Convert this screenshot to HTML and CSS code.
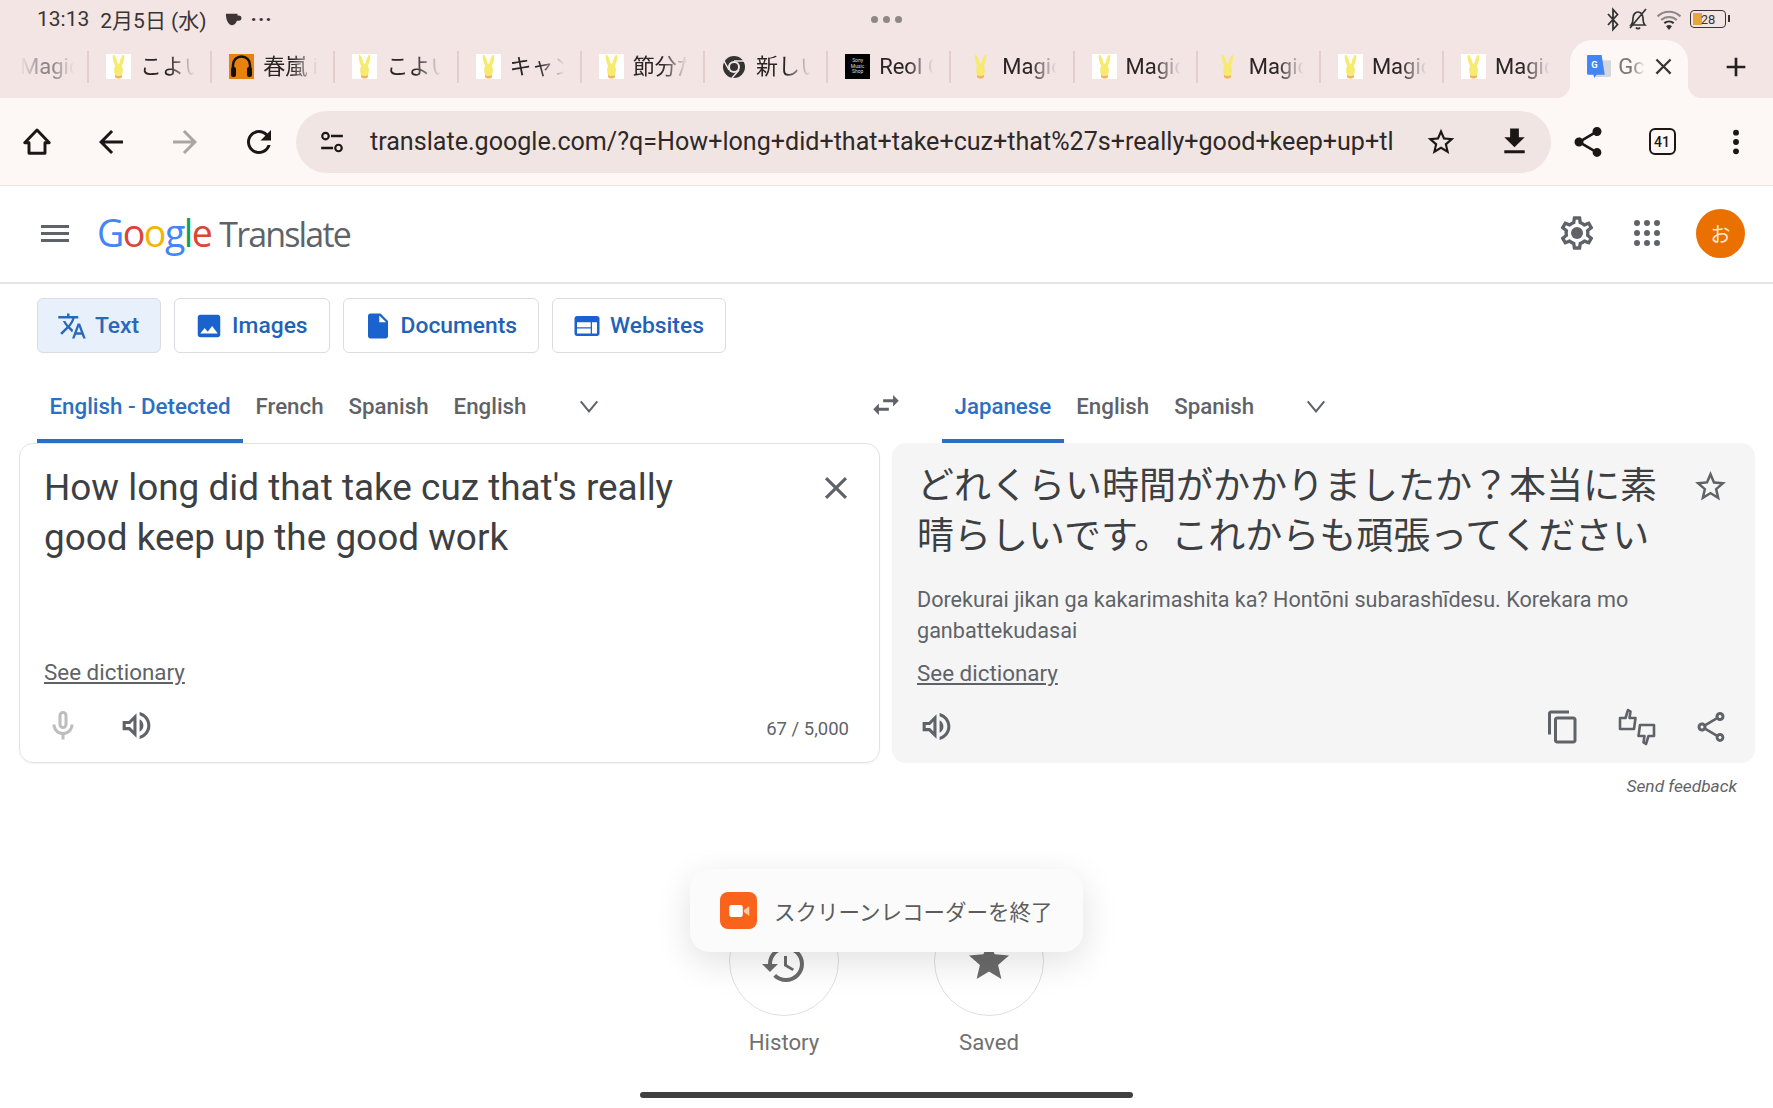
FILE: index.html
```html
<!DOCTYPE html>
<html lang="ja">
<head>
  <meta charset="UTF-8">
  <title>Google Translate</title>
  <link rel="stylesheet" href="styles.css">
</head>
<body>
  <svg class="defs" width="0" height="0">
    <symbol id="bunny" viewBox="0 0 25 40">
      <path d="M4 1c3 0 6 8 7 14h3c1-6 4-14 7-14 2 2 0 12-3 18 2 4 2 10 0 14-3 3-8 3-11 0-2-4-2-10 0-14C4 13 2 3 4 1z" fill="#f7ea70"/>
      <path d="M7 33c3 3 8 3 11 0v4c-3 3-8 3-11 0z" fill="#f2b35c"/>
    </symbol>
    <symbol id="speaker" viewBox="0 0 24 24">
      <path d="M3 9v6h4l5 5V4L7 9H3zm7-.17v6.34L7.83 13H5v-2h2.83L10 8.83zM16.5 12c0-1.77-1.02-3.29-2.5-4.03v8.05c1.48-.73 2.5-2.25 2.5-4.02zM14 3.23v2.06c2.89.86 5 3.54 5 6.71s-2.11 5.85-5 6.71v2.06c4.01-.91 7-4.49 7-8.77 0-4.28-2.99-7.86-7-8.77z"/>
    </symbol>
    <symbol id="star-line" viewBox="0 0 24 24">
      <path d="M22 9.24l-7.19-.62L12 2 9.19 8.63 2 9.24l5.46 4.73L5.82 21 12 17.27 18.18 21l-1.63-7.03L22 9.24zM12 15.4l-3.76 2.27 1-4.28-3.32-2.88 4.38-.38L12 6.1l1.71 4.04 4.38.38-3.32 2.88 1 4.28L12 15.4z"/>
    </symbol>
    <symbol id="chevron" viewBox="0 0 24 24">
      <path d="M3 7l9 11 9-11" fill="none" stroke="#5f6368" stroke-width="2.2"/>
    </symbol>
    <symbol id="close" viewBox="0 0 24 24">
      <path d="M19 6.41L17.59 5 12 10.59 6.41 5 5 6.41 10.59 12 5 17.59 6.41 19 12 13.41 17.59 19 19 17.59 13.41 12z"/>
    </symbol>
  </svg>

  <div class="status-bar">
    <div class="status-left">
      <span>13:13</span><span>2月5日 (水)</span>
      <svg class="st-cup" viewBox="0 0 20 18" width="18" height="16"><path d="M2 3h13v2h1.5a3 3 0 0 1 0 6H14.400c-1 3-3 5-5.400 5-4 0-7-6-7-13z" fill="#3b3535"/></svg>
      <span class="st-more">···</span>
    </div>
    <div class="status-dots"><i></i><i></i><i></i></div>
    <div class="status-right">
      <svg viewBox="0 0 14 24" width="14" height="25"><path d="M2 6.500l9.500 10.500L7 22V2l4.500 5L2 17.500" fill="none" stroke="#333" stroke-width="1.800"/></svg>
      <svg viewBox="0 0 24 24" width="24" height="26"><path d="M5 18c2-2 2-4 2-7 0-3 2-6 5-6s5 3 5 6c0 3 0 5 2 7zM10 20.500c1 1.500 3 1.500 4 0M4 21L20 2" fill="none" stroke="#333" stroke-width="1.700"/></svg>
      <svg viewBox="0 0 24 24" width="26" height="25"><path d="M1 9a16 16 0 0 1 22 0M4.500 12.500a11 11 0 0 1 15 0" fill="none" stroke="#8d8887" stroke-width="2"/><path d="M7.500 15.500a7 7 0 0 1 9 0" fill="none" stroke="#333" stroke-width="2"/><path d="M12 22l-2.800-3.500a4.500 4.500 0 0 1 5.600 0z" fill="#333"/></svg>
      <div class="battery"><div class="battery-fill"></div><span>28</span></div>
    </div>
  </div>

  <div class="tab-strip">
    <div class="tab tab-first"><span class="tab-name tab-name-first">Magic</span></div>
    <div class="tab"><span class="fav fav-white"><svg width="25" height="25"><use href="#bunny"/></svg></span><span class="tab-name">こよい</span></div>
    <div class="tab"><span class="fav fav-orange"><svg viewBox="0 0 25 25" width="25" height="25"><path d="M4 14v-3a8.500 8.500 0 0 1 17 0v3" fill="none" stroke="#111" stroke-width="2.500"/><rect x="2" y="13" width="5" height="10" rx="2" fill="#111"/><rect x="18" y="13" width="5" height="10" rx="2" fill="#111"/></svg></span><span class="tab-name">春嵐 in</span></div>
    <div class="tab"><span class="fav fav-white"><svg width="25" height="25"><use href="#bunny"/></svg></span><span class="tab-name">こよい</span></div>
    <div class="tab"><span class="fav fav-white"><svg width="25" height="25"><use href="#bunny"/></svg></span><span class="tab-name">キャン</span></div>
    <div class="tab"><span class="fav fav-white"><svg width="25" height="25"><use href="#bunny"/></svg></span><span class="tab-name">節分だ</span></div>
    <div class="tab"><span class="fav"><svg viewBox="0 0 24 24" width="24" height="24"><circle cx="12" cy="12" r="11" fill="#333"/><circle cx="12" cy="12" r="6" fill="#f2e5e4"/><circle cx="12" cy="12" r="4" fill="#333"/><path d="M12 6h10M7 15L2 6M17 15l-7 8" stroke="#f2e5e4" stroke-width="1.500"/></svg></span><span class="tab-name">新しい</span></div>
    <div class="tab"><span class="fav fav-black"><small>Sony Music Shop</small></span><span class="tab-name">Reol O</span></div>
    <div class="tab"><span class="fav"><svg width="25" height="25"><use href="#bunny"/></svg></span><span class="tab-name">Magic</span></div>
    <div class="tab"><span class="fav fav-white"><svg width="25" height="25"><use href="#bunny"/></svg></span><span class="tab-name">Magic</span></div>
    <div class="tab"><span class="fav"><svg width="25" height="25"><use href="#bunny"/></svg></span><span class="tab-name">Magic</span></div>
    <div class="tab"><span class="fav fav-white"><svg width="25" height="25"><use href="#bunny"/></svg></span><span class="tab-name">Magic</span></div>
    <div class="tab tab-last"><span class="fav fav-white"><svg width="25" height="25"><use href="#bunny"/></svg></span><span class="tab-name">Magic</span></div>
    <div class="tab-active">
      <svg viewBox="0 0 24 24" width="25" height="25"><rect x="9" y="6" width="15" height="16" rx="1" fill="#d5d8da"/><path d="M2 1h13l3 19h-8l-2 3-1-3H2a1 1 0 0 1-1-1V2a1 1 0 0 1 1-1z" fill="#4285f4"/><text x="5" y="13" font-size="9" font-family="Roboto" font-weight="700" fill="#fff">G</text></svg>
      <span class="tab-name tab-name-short">Gc</span>
      <svg class="tab-close" width="27" height="27"><use href="#close"/></svg>
    </div>
    <svg class="tab-plus" viewBox="0 0 24 24" width="32" height="32"><path d="M19 13h-6v6h-2v-6H5v-2h6V5h2v6h6v2z" fill="#222"/></svg>
  </div>

  <div class="toolbar">
    <div class="tool"><svg viewBox="0 0 24 24" width="32" height="32"><path d="M12 3L2.800 12.500H6V20.500H18V12.500H21.200z" fill="none" stroke="#1c1717" stroke-width="2.200" stroke-linejoin="round"/></svg></div>
    <div class="tool"><svg viewBox="0 0 24 24" width="36" height="36"><path d="M20 11H7.830l5.590-5.590L12 4l-8 8 8 8 1.410-1.410L7.830 13H20v-2z" fill="#1c1717"/></svg></div>
    <div class="tool"><svg viewBox="0 0 24 24" width="36" height="36"><path d="M4 11h12.170l-5.590-5.590L12 4l8 8-8 8-1.410-1.410L16.170 13H4v-2z" fill="#aaa5a4"/></svg></div>
    <div class="tool"><svg viewBox="0 0 24 24" width="36" height="36"><path d="M17.650 6.350C16.200 4.900 14.210 4 12 4c-4.420 0-7.990 3.580-7.990 8s3.570 8 7.990 8c3.730 0 6.840-2.550 7.730-6h-2.080c-.82 2.330-3.040 4-5.650 4-3.310 0-6-2.690-6-6s2.690-6 6-6c1.660 0 3.140.69 4.220 1.780L13 11h7V4l-2.350 2.350z" fill="#1c1717"/></svg></div>
    <div class="url-bar">
      <svg class="url-tune" viewBox="0 0 24 24" width="26" height="26"><circle cx="6" cy="6.500" r="3" fill="none" stroke="#1c1717" stroke-width="2"/><path d="M11 6.500h11M2 17.500h11" stroke="#1c1717" stroke-width="2.200"/><circle cx="18" cy="17.500" r="3" fill="none" stroke="#1c1717" stroke-width="2"/></svg>
      <div class="url-text">translate.google.com/?q=How+long+did+that+take+cuz+that%27s+really+good+keep+up+tl</div>
      <svg class="url-star" width="32" height="32" fill="#1c1717"><use href="#star-line"/></svg>
      <svg class="url-down" viewBox="0 0 24 24" width="35" height="35"><path d="M19 9h-4V3H9v6H5l7 7 7-7zM5 18v2h14v-2H5z" fill="#1c1717"/></svg>
    </div>
    <div class="tool"><svg viewBox="0 0 24 24" width="36" height="36"><path d="M18 16.080c-.76 0-1.440.3-1.960.77L8.910 12.700c.05-.23.09-.46.09-.7s-.04-.47-.09-.7l7.050-4.110c.54.5 1.250.81 2.040.81 1.660 0 3-1.340 3-3s-1.340-3-3-3-3 1.340-3 3c0 .24.04.47.09.7L8.040 9.810C7.500 9.310 6.790 9 6 9c-1.660 0-3 1.340-3 3s1.340 3 3 3c.79 0 1.500-.31 2.040-.81l7.120 4.160c-.05.21-.08.43-.08.65 0 1.610 1.310 2.920 2.920 2.920 1.610 0 2.920-1.310 2.920-2.920s-1.310-2.920-2.920-2.920z" fill="#1c1717"/></svg></div>
    <div class="tool"><div class="tab-count">41</div></div>
    <div class="tool"><svg viewBox="0 0 24 24" width="32" height="32"><circle cx="12" cy="5" r="2.200" fill="#1c1717"/><circle cx="12" cy="12" r="2.200" fill="#1c1717"/><circle cx="12" cy="19" r="2.200" fill="#1c1717"/></svg></div>
  </div>

  <header class="gt-header">
    <svg class="menu-icon" viewBox="0 0 30 30" width="30" height="30"><path d="M1 7h28v3H1zM1 14h28v3H1zM1 21h28v3H1z" fill="#5f6368"/></svg>
    <div class="logo"><span class="lg-b">G</span><span class="lg-r">o</span><span class="lg-y">o</span><span class="lg-b">g</span><span class="lg-g">l</span><span class="lg-r">e</span><span class="logo-name">Translate</span></div>
    <svg class="gear" viewBox="0 0 24 24" width="40" height="40"><path fill="#5f6368" d="M19.430 12.980c.04-.32.07-.64.07-.98 0-.34-.03-.66-.07-.98l2.110-1.650c.19-.15.24-.42.12-.64l-2-3.460c-.09-.16-.26-.25-.44-.25-.06 0-.12.01-.17.03l-2.490 1c-.52-.4-1.080-.73-1.690-.98l-.38-2.650C14.460 2.180 14.250 2 14 2h-4c-.25 0-.46.18-.49.42l-.38 2.650c-.61.25-1.170.59-1.690.98l-2.490-1c-.06-.02-.12-.03-.18-.03-.17 0-.34.09-.43.25l-2 3.460c-.13.22-.07.49.12.64l2.110 1.650c-.04.32-.07.65-.07.98 0 .33.03.66.07.98l-2.110 1.650c-.19.15-.24.42-.12.64l2 3.460c.09.16.26.25.44.25.06 0 .12-.01.17-.03l2.490-1c.52.4 1.080.73 1.690.98l.38 2.650c.03.24.24.42.49.42h4c.25 0 .46-.18.49-.42l.38-2.650c.61-.25 1.170-.59 1.690-.98l2.490 1c.06.02.12.03.18.03.17 0 .34-.09.43-.25l2-3.460c.12-.22.07-.49-.12-.64l-2.110-1.650zm-1.980-1.710c.04.31.05.52.05.73 0 .21-.02.43-.05.73l-.14 1.130.89.7 1.080.84-.7 1.210-1.270-.51-1.040-.42-.9.68c-.43.32-.84.56-1.250.73l-1.060.43-.16 1.130-.2 1.350h-1.400l-.19-1.350-.16-1.130-1.060-.43c-.43-.18-.83-.41-1.230-.71l-.91-.7-1.060.43-1.270.51-.7-1.210 1.080-.84.89-.7-.14-1.130c-.03-.31-.05-.54-.05-.74s.02-.43.05-.73l.14-1.130-.89-.7-1.080-.84.7-1.210 1.270.51 1.040.42.9-.68c.43-.32.84-.56 1.250-.73l1.060-.43.16-1.130.2-1.350h1.390l.19 1.350.16 1.130 1.060.43c.43.18.83.41 1.230.71l.91.7 1.060-.43 1.270-.51.7 1.210-1.070.85-.89.7.14 1.130z"/><circle cx="12" cy="12" r="3.600" fill="#5f6368"/></svg>
    <div class="apps"><i></i><i></i><i></i><i></i><i></i><i></i><i></i><i></i><i></i></div>
    <div class="avatar">お</div>
  </header>

  <main class="translate">
    <div class="modes">
      <button class="mode mode-on"><svg viewBox="0 0 24 24" width="30" height="30"><path d="M12.870 15.070l-2.540-2.510.03-.03c1.740-1.940 2.980-4.170 3.710-6.530H17V4h-7V2H8v2H1v1.990h11.170C11.500 7.920 10.440 9.750 9 11.350 8.070 10.320 7.300 9.190 6.690 8h-2c.73 1.630 1.730 3.170 2.980 4.560l-5.090 5.020L4 19l5-5 3.110 3.110.76-2.040zM18.500 10h-2L12 22h2l1.120-3h4.750L21 22h2l-4.500-12zm-2.620 7l1.620-4.330L19.120 17h-3.240z"/></svg>Text</button>
      <button class="mode"><svg viewBox="0 0 24 24" width="30" height="30"><path d="M21 19V5c0-1.100-.9-2-2-2H5c-1.100 0-2 .9-2 2v14c0 1.100.9 2 2 2h14c1.100 0 2-.9 2-2zM8.500 13.500l2.500 3.010L14.500 12l4.500 6H5l3.500-4.500z"/></svg>Images</button>
      <button class="mode"><svg viewBox="0 0 24 24" width="30" height="30"><path d="M14 2H6c-1.100 0-2 .9-2 2v16c0 1.100.9 2 2 2h12c1.100 0 2-.9 2-2V8l-6-6zM13 9V3.500L18.500 9H13z"/></svg>Documents</button>
      <button class="mode"><svg viewBox="0 0 24 24" width="30" height="30"><path d="M20 4H4c-1.100 0-2 .9-2 2v12c0 1.100.9 2 2 2h16c1.100 0 2-.9 2-2V6c0-1.100-.9-2-2-2zM4 9h11v4H4zm0 5h11v4H4zm12-5h4v9h-4z" fill-rule="evenodd"/></svg>Websites</button>
    </div>

    <div class="lang-row">
      <div class="lang-side lang-source">
        <div class="lang lang-on">English - Detected</div>
        <div class="lang">French</div>
        <div class="lang">Spanish</div>
        <div class="lang">English</div>
        <svg class="chevron" width="22" height="22"><use href="#chevron"/></svg>
        <svg class="swap" viewBox="0 0 24 24" width="34" height="34"><path d="M6.990 11L3 15l3.990 4v-3H14v-2H6.990v-3zM21 9l-3.990-4v3H10v2h7.010v3L21 9z" fill="#5f6368"/></svg>
      </div>
      <div class="lang-side">
        <div class="lang lang-on">Japanese</div>
        <div class="lang">English</div>
        <div class="lang">Spanish</div>
        <svg class="chevron chevron-out" width="22" height="22"><use href="#chevron"/></svg>
      </div>
    </div>

    <div class="panels">
      <section class="panel panel-in">
        <div class="big-row">
          <p class="big-text">How long did that take cuz that's really good keep up the good work</p>
          <svg class="close-in" width="38" height="38" fill="#5f6368"><use href="#close"/></svg>
        </div>
        <a class="dict">See dictionary</a>
        <div class="panel-foot">
          <svg class="foot-mic" viewBox="0 0 24 24" width="36" height="36"><path fill="#bdbdbd" d="M12 14c1.660 0 3-1.340 3-3V5c0-1.660-1.340-3-3-3S9 3.340 9 5v6c0 1.660 1.340 3 3 3zm-1-9c0-.55.45-1 1-1s1 .45 1 1v6c0 .55-.45 1-1 1s-1-.45-1-1V5zm6 6c0 2.760-2.240 5-5 5s-5-2.240-5-5H5c0 3.530 2.610 6.430 6 6.920V21h2v-3.080c3.390-.49 6-3.390 6-6.920h-2z"/></svg>
          <svg class="foot-speak" width="37" height="37" fill="#5f6368"><use href="#speaker"/></svg>
          <span class="counter">67 / 5,000</span>
        </div>
      </section>

      <section class="panel panel-out">
        <div class="big-row">
          <p class="big-text big-ja">どれくらい時間がかかりましたか？本当に素晴らしいです。これからも頑張ってください</p>
          <svg class="star-out" width="37" height="37" fill="#5f6368"><use href="#star-line"/></svg>
        </div>
        <p class="romaji">Dorekurai jikan ga kakarimashita ka? Hontōni subarashīdesu. Korekara mo ganbattekudasai</p>
        <a class="dict dict-out">See dictionary</a>
        <div class="panel-foot">
          <svg class="out-speak" width="37" height="37" fill="#5f6368"><use href="#speaker"/></svg>
          <div class="out-actions">
            <svg viewBox="0 0 24 24" width="36" height="38"><path fill="#5f6368" d="M16 1H4c-1.100 0-2 .9-2 2v14h2V3h12V1zm3 4H8c-1.100 0-2 .9-2 2v14c0 1.100.9 2 2 2h11c1.100 0 2-.9 2-2V7c0-1.100-.9-2-2-2zm0 16H8V7h11v14z"/></svg>
            <svg viewBox="0 0 40 40" width="40" height="40"><path d="M3 22V11h5.500L11 3l2.500 1.500-1 6.500H18.500L17 22zM37 18V29h-5.500L29 37l-2.500-1.500 1-6.500H21.500L23 18z" fill="none" stroke="#5f6368" stroke-width="2.600" stroke-linejoin="round"/></svg>
            <svg viewBox="0 0 24 24" width="36" height="36"><path fill="#5f6368" d="M18 16.080c-.76 0-1.440.3-1.960.77L8.910 12.700c.05-.23.09-.46.09-.7s-.04-.47-.09-.7l7.050-4.110c.54.5 1.250.81 2.040.81 1.660 0 3-1.340 3-3s-1.340-3-3-3-3 1.340-3 3c0 .24.04.47.09.7L8.040 9.810C7.500 9.310 6.790 9 6 9c-1.660 0-3 1.340-3 3s1.340 3 3 3c.79 0 1.500-.31 2.040-.81l7.120 4.160c-.05.21-.08.43-.08.65 0 1.610 1.310 2.920 2.920 2.920s2.920-1.310 2.920-2.920c0-1.610-1.310-2.920-2.920-2.920zM18 4c.55 0 1 .45 1 1s-.45 1-1 1-1-.45-1-1 .45-1 1-1zM6 13c-.55 0-1-.45-1-1s.45-1 1-1 1 .45 1 1-.45 1-1 1zm12 7.020c-.55 0-1-.45-1-1s.45-1 1-1 1 .45 1 1-.45 1-1 1z"/></svg>
          </div>
        </div>
      </section>
    </div>

    <div class="feedback">Send feedback</div>

    <div class="saved-row">
      <div class="saved-item">
        <div class="circle"><svg class="clock" viewBox="0 0 24 24" width="48" height="48"><path fill="#6b6b6b" d="M13 3c-4.970 0-9 4.030-9 9H1l3.890 3.890.07.14L9 12H6c0-3.870 3.130-7 7-7s7 3.130 7 7-3.130 7-7 7c-1.930 0-3.680-.79-4.940-2.060l-1.420 1.420C8.270 19.990 10.510 21 13 21c4.970 0 9-4.030 9-9s-4.030-9-9-9zm-1 5v5l4.280 2.540.72-1.210-3.500-2.080V8H12z"/></svg></div>
        <div class="saved-label">History</div>
      </div>
      <div class="saved-item">
        <div class="circle"><svg viewBox="0 0 24 24" width="48" height="48"><path fill="#6b6b6b" d="M12 17.270L18.180 21l-1.640-7.030L22 9.240l-7.190-.61L12 2 9.190 8.630 2 9.240l5.460 4.730L5.820 21z"/></svg></div>
        <div class="saved-label">Saved</div>
      </div>
    </div>
  </main>

  <div class="toast">
    <div class="toast-icon"><svg viewBox="0 0 24 24" width="26" height="26"><rect x="3" y="6.500" width="12.500" height="11" rx="2" fill="#fff"/><path d="M16.500 11l5-3.500v9l-5-3.500z" fill="#ffc9a8"/></svg></div>
    <span>スクリーンレコーダーを終了</span>
  </div>
  <div class="home-bar"></div>
</body>
</html>
```

FILE: styles.css
```css
* {
  box-sizing: border-box;
}
html, body {
  margin: 0;
  height: 100%;
}
body {
  position: relative;
  width: 1773px;
  height: 1108px;
  overflow: hidden;
  background: #fff;
  font-family: Roboto, "Noto Sans CJK JP", sans-serif;
  color: #3c4043;
}
.defs {
  position: absolute;
}

/* android status bar */
.status-bar {
  display: grid;
  grid-template-columns: 1fr auto 1fr;
  align-items: center;
  height: 40px;
  padding: 0 38px 2px 37px;
  background: #f2e5e4;
  color: #3a3434;
  font-size: 21px;
}
.status-left {
  display: flex;
  align-items: center;
  gap: 11px;
}
.st-cup {
  margin-left: 6px;
}
.st-more {
  margin-left: -2px;
  font-weight: 700;
  letter-spacing: 1px;
}
.status-dots {
  display: flex;
  gap: 5px;
}
.status-dots i {
  width: 7px;
  height: 7px;
  border-radius: 50%;
  background: #8d8887;
}
.status-right {
  display: flex;
  align-items: center;
  justify-content: flex-end;
  gap: 6px;
  padding-right: 9px;
}
.battery {
  position: relative;
  display: flex;
  align-items: center;
  justify-content: center;
  width: 36px;
  height: 18px;
  margin-left: 2px;
  border: 1.5px solid #3a3434;
  border-radius: 4px;
  font-size: 13px;
  line-height: 1;
}
.battery::after {
  content: "";
  position: absolute;
  right: -5px;
  top: 4px;
  width: 2px;
  height: 7px;
  background: #3a3434;
}
.battery-fill {
  position: absolute;
  left: 2px;
  top: 2px;
  bottom: 2px;
  width: 9px;
  background: #eaa53a;
}
.battery span {
  position: relative;
}

/* chrome tabs */
.tab-strip {
  display: flex;
  align-items: center;
  height: 58px;
  padding-bottom: 5px;
  background: #f2e5e4;
}
.tab {
  display: flex;
  flex: none;
  align-items: center;
  gap: 9px;
  width: 123.2px;
  height: 32px;
  padding-left: 17px;
  border-right: 2px solid #e2cfcb;
}
.tab-first {
  width: 89px;
  padding-left: 20px;
}
.tab-last {
  border-right: 0;
}
.fav {
  display: flex;
  flex: none;
  align-items: center;
  justify-content: center;
  width: 25px;
  height: 25px;
  overflow: hidden;
}
.fav-white {
  background: #fff;
}
.fav-orange {
  background: #e8820c;
}
.fav-black {
  background: #000;
}
.fav-black small {
  color: #ddd;
  font-size: 5px;
  line-height: 1.1;
  text-align: center;
}
.tab-name {
  flex: none;
  width: 68px;
  color: #2b2525;
  font-size: 22px;
  line-height: 30px;
  white-space: nowrap;
  -webkit-mask-image: linear-gradient(90deg, #000 42%, transparent 80%);
  mask-image: linear-gradient(90deg, #000 42%, transparent 80%);
}
.tab-name-first {
  width: 54px;
  color: #8b8483;
  -webkit-mask-image: linear-gradient(90deg, transparent 0, #000 45%, #000 60%, transparent 100%);
  mask-image: linear-gradient(90deg, transparent 0, #000 45%, #000 60%, transparent 100%);
}
.tab-name-short {
  width: 27px;
  color: #7b7574;
  -webkit-mask-image: linear-gradient(90deg, #000 50%, transparent 100%);
  mask-image: linear-gradient(90deg, #000 50%, transparent 100%);
}
.tab-active {
  position: relative;
  display: flex;
  flex: none;
  align-items: center;
  gap: 7px;
  align-self: flex-end;
  width: 118px;
  height: 58px;
  margin: 0 0 -5px 3px;
  padding: 0 0 5px 16px;
  border-radius: 22px 22px 0 0;
  background: #fdf8f6;
}
.tab-active::before,
.tab-active::after {
  content: "";
  position: absolute;
  bottom: 0;
  width: 14px;
  height: 14px;
  background: radial-gradient(circle at 0 0, #f2e5e4 14px, #fdf8f6 14.5px);
}
.tab-active::before {
  left: -14px;
}
.tab-active::after {
  right: -14px;
  background: radial-gradient(circle at 100% 0, #f2e5e4 14px, #fdf8f6 14.5px);
}
.tab-close {
  flex: none;
  margin-left: -2px;
  fill: #3a3434;
}
.tab-plus {
  margin-left: 32px;
}

/* chrome toolbar */
.toolbar {
  display: flex;
  align-items: center;
  height: 88px;
  background: #fdf8f6;
  border-bottom: 1px solid #efe7e5;
}
.tool {
  display: flex;
  flex: none;
  align-items: center;
  justify-content: center;
  width: 74px;
  height: 62px;
}
.url-bar {
  display: flex;
  flex: none;
  align-items: center;
  width: 1255px;
  height: 62px;
  padding-left: 23px;
  border-radius: 31px;
  background: #f1e5e3;
}
.url-tune {
  flex: none;
}
.url-text {
  flex: none;
  width: 1023px;
  margin-left: 25px;
  color: #2e2828;
  font-size: 25.1px;
  white-space: nowrap;
}
.url-star {
  flex: none;
  margin-left: 32px;
}
.url-down {
  flex: none;
  margin-left: 40px;
}
.tab-count {
  display: flex;
  align-items: center;
  justify-content: center;
  width: 27px;
  height: 27px;
  border: 2.5px solid #1c1717;
  border-radius: 6px;
  color: #1c1717;
  font-size: 14px;
  font-weight: 500;
}

/* translate header */
.gt-header {
  display: flex;
  align-items: center;
  height: 98px;
  padding: 0 28px 2px 40px;
  border-bottom: 2px solid #e6e6e6;
}
.menu-icon {
  flex: none;
}
.logo {
  margin: -2px 0 0 27px;
  font-family: "Open Sans", sans-serif;
  font-size: 37.5px;
  letter-spacing: -1.5px;
  white-space: nowrap;
}
.lg-b { color: #4285f4; }
.lg-r { color: #db4437; }
.lg-y { color: #f4b400; }
.lg-g { color: #0f9d58; }
.logo-name {
  margin-left: 8px;
  color: #5f6368;
  font-size: 34px;
  letter-spacing: -1.85px;
}
.gear {
  margin-left: auto;
}
.apps {
  display: grid;
  grid-template-columns: repeat(3, 6px);
  gap: 4px;
  margin-left: 37px;
}
.apps i {
  height: 6px;
  border-radius: 50%;
  background: #5f6368;
}
.avatar {
  display: flex;
  align-items: center;
  justify-content: center;
  width: 49px;
  height: 49px;
  margin-left: 36px;
  border-radius: 50%;
  background: #ea7000;
  color: #ffe9d5;
  font-size: 20px;
}

/* mode buttons */
.modes {
  display: flex;
  gap: 13px;
  padding: 14px 0 0 37px;
}
.mode {
  display: flex;
  align-items: center;
  gap: 8px;
  height: 55px;
  padding: 0 21px 0 19px;
  border: 1.5px solid #dadce0;
  border-radius: 6px;
  background: #fff;
  color: #1f63b8;
  font-family: inherit;
  font-size: 22.8px;
  font-weight: 500;
}
.mode svg {
  fill: #1a63cf;
}
.mode-on {
  background: #e8f0fb;
  color: #2a68b8;
}
.mode-on svg {
  fill: #2a68b8;
}

/* language tabs */
.lang-row {
  display: flex;
  height: 90px;
  padding-left: 37px;
}
.lang-side {
  display: flex;
  align-items: stretch;
}
.lang-source {
  flex: none;
  width: 905px;
}
.lang {
  display: flex;
  align-items: center;
  padding: 19px 12.5px 0;
  color: #5f6368;
  font-size: 22.3px;
  font-weight: 500;
  border-bottom: 4px solid transparent;
}
.lang-on {
  color: #2a6fc4;
  border-bottom-color: #2a6fc4;
}
.chevron {
  align-self: center;
  margin: 16px 0 0 39px;
}
.chevron-out {
  margin-left: 38px;
}
.swap {
  align-self: center;
  margin: 14px 39px 0 auto;
}

/* panels */
.panels {
  display: flex;
  gap: 12px;
  height: 320px;
  padding: 0 18px 0 19px;
}
.panel {
  display: flex;
  flex: 1;
  flex-direction: column;
  min-width: 0;
}
.panel-in {
  flex: none;
  width: 861px;
  padding: 19px 24px 0 24px;
  border: 1.5px solid #e3e3e3;
  border-radius: 14px;
  box-shadow: 0 1px 2px #0000000d;
}
.panel-out {
  padding: 19px 26px 0 25px;
  border-radius: 14px;
  background: #f5f5f5;
}
.big-row {
  display: flex;
  justify-content: space-between;
}
.big-text {
  width: 670px;
  margin: 0;
  color: #3c4043;
  font-size: 36.9px;
  line-height: 50px;
}
.big-ja {
  width: 752px;
  font-size: 37px;
}
.close-in {
  flex: none;
  margin-top: 6px;
}
.star-out {
  flex: none;
  margin-top: 6px;
}
.dict {
  margin-top: 96px;
  color: #5f6368;
  font-size: 22.4px;
  text-decoration: underline;
  text-underline-offset: 2px;
}
.panel-in .dict {
  align-self: flex-start;
}
.romaji {
  margin: 22px 0 0;
  color: #5f6368;
  font-size: 21.6px;
  line-height: 31px;
  width: 760px;
}
.dict-out {
  margin-top: 14px;
}
.panel-foot {
  display: flex;
  align-items: center;
  margin-top: auto;
  height: 66px;
  padding-bottom: 7px;
}
.foot-mic {
  margin-left: 1px;
}
.foot-speak {
  margin-left: 37px;
}
.counter {
  margin: 6px 6px 0 auto;
  color: #5f6368;
  font-size: 18.5px;
}
.out-speak {
  margin-left: 1px;
}
.out-actions {
  display: flex;
  align-items: center;
  gap: 36px;
  margin-left: auto;
}
.feedback {
  height: 48px;
  padding: 13px 36px 0 0;
  color: #5f6368;
  font-size: 17.3px;
  font-style: italic;
  text-align: right;
}

/* history and saved */
.saved-row {
  display: flex;
  justify-content: center;
  gap: 95px;
  margin-top: 95px;
}
.saved-item {
  display: flex;
  flex-direction: column;
  align-items: center;
  width: 110px;
}
.circle {
  display: flex;
  align-items: center;
  justify-content: center;
  width: 110px;
  height: 110px;
  border: 1.5px solid #dfdfdf;
  border-radius: 50%;
}
.clock {
  margin-top: 5px;
}
.saved-label {
  margin-top: 13px;
  color: #707070;
  font-size: 22.2px;
}

/* overlays */
.toast {
  position: absolute;
  left: 690px;
  top: 869px;
  display: flex;
  align-items: center;
  gap: 17px;
  width: 393px;
  height: 83px;
  padding-left: 30px;
  border-radius: 20px;
  background: #fbfbfb;
  box-shadow: 0 10px 36px #0000001f;
  color: #5c5c5c;
  font-size: 21.5px;
}
.toast-icon {
  display: flex;
  align-items: center;
  justify-content: center;
  width: 37px;
  height: 37px;
  border-radius: 8px;
  background: #f9631b;
}
.home-bar {
  position: absolute;
  left: 640px;
  top: 1092px;
  width: 493px;
  height: 6px;
  border-radius: 3px;
  background: #404040;
}
```
